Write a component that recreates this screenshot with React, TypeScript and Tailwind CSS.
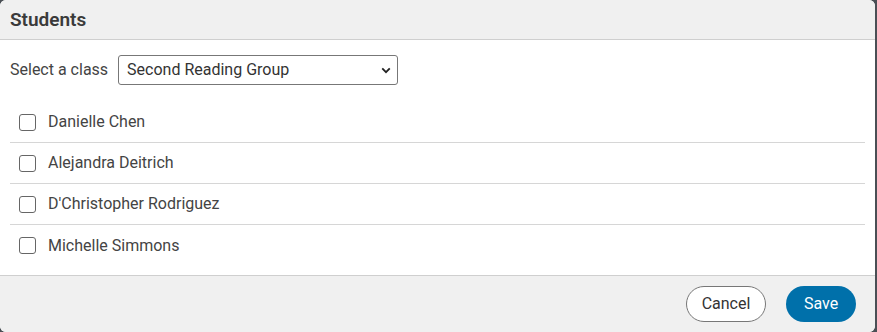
import { useState } from "react";

const STUDENTS = [
  "Danielle Chen",
  "Alejandra Deitrich",
  "D'Christopher Rodriguez",
  "Michelle Simmons",
];

export default function App() {
  const [group, setGroup] = useState("second");
  const [checked, setChecked] = useState<Record<string, boolean>>({});

  return (
    <main className="h-[332px] w-[877px] bg-[#4a4f55] font-['Roboto',sans-serif] text-[#333]">
      <div className="flex h-full w-[875px] flex-col overflow-hidden rounded-[6px] bg-white">
        {/* header */}
        <header className="flex h-[40px] shrink-0 items-center border-b border-[#cfcfcf] bg-[#f0f0f0] px-[10px] pt-[2px]">
          <h1 className="text-[19px] font-semibold text-[#3a3a3a]">Students</h1>
        </header>

        {/* body */}
        <section className="flex-1 px-[10px] pt-[15px]">
          <div className="flex items-center gap-[10px]">
            <label className="text-[16px] text-[#444]">Select a class</label>
            <div className="relative">
              <select
                value={group}
                onChange={(e) => setGroup(e.target.value)}
                className="h-[30px] w-[280px] appearance-none rounded-[3px] border border-[#777] bg-white pl-[8px] text-[16px] text-[#333]"
              >
                <option value="first">First Reading Group</option>
                <option value="second">Second Reading Group</option>
              </select>
              <svg
                viewBox="0 0 12 8"
                className="pointer-events-none absolute right-[7px] top-[12px] h-[7px] w-[10px]"
                aria-hidden="true"
              >
                <path d="M1.5 1.5 6 6l4.5-4.5" fill="none" stroke="#222" strokeWidth="2.2" />
              </svg>
            </div>
          </div>

          <ul className="mt-[17px]">
            {STUDENTS.map((name, i) => (
              <li
                key={name}
                className={`flex h-[41px] items-center gap-[12px] pl-[9px] ${
                  i < STUDENTS.length - 1 ? "border-b border-[#d6d6d6]" : ""
                }`}
              >
                <button
                  type="button"
                  onClick={() => setChecked((c) => ({ ...c, [name]: !c[name] }))}
                  className="h-[17px] w-[17px] rounded-[3px] border border-[#666] bg-white"
                  aria-pressed={!!checked[name]}
                />
                <span className="text-[16px] text-[#444]">{name}</span>
              </li>
            ))}
          </ul>
        </section>

        {/* footer */}
        <footer className="flex h-[57px] shrink-0 items-center justify-end gap-[20px] border-t border-[#cfcfcf] bg-[#f0f0f0] pr-[19px]">
          <button
            type="button"
            className="h-[36px] w-[80px] rounded-full border border-[#777] bg-white text-[16px] text-[#333]"
          >
            Cancel
          </button>
          <button
            type="button"
            className="h-[36px] w-[70px] rounded-full bg-[#0070aa] text-[16px] text-white"
          >
            Save
          </button>
        </footer>
      </div>
    </main>
  );
}
